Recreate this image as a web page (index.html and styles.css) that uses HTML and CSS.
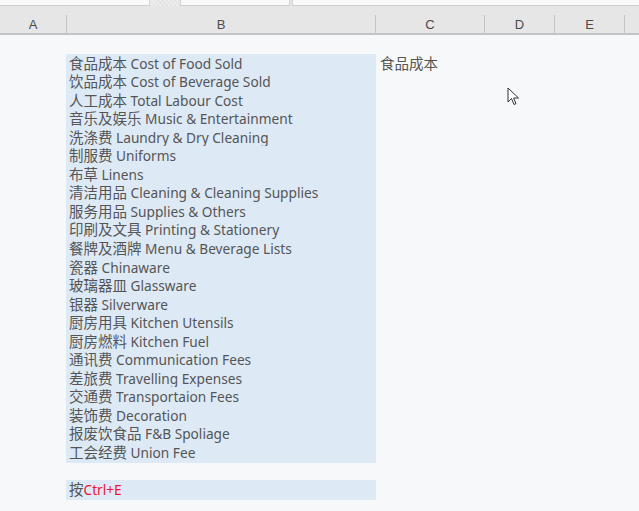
FILE: index.html
```html
<!DOCTYPE html>
<html lang="zh-CN">
<head>
  <meta charset="UTF-8" />
  <title>Sheet</title>
  <link rel="stylesheet" href="styles.css">
</head>
<body>
  <div class="tabs">
    <div class="tab tab-first"></div>
    <div class="tab-gap"></div>
    <div class="tab tab-second"></div>
    <div class="tab tab-rest"></div>
  </div>

  <div class="col-header">
    <div class="col-head col-a">A</div>
    <div class="col-head col-b">B</div>
    <div class="col-head col-c">C</div>
    <div class="col-head col-d">D</div>
    <div class="col-head col-e">E</div>
    <div class="col-head col-f"></div>
  </div>

  <div class="sheet" id="sheet"></div>

  <svg class="pointer" width="14" height="20" viewBox="0 0 14 20">
    <path d="M1 1 L1 15 L4.5 11.5 L7 17.5 L9 16.6 L6.6 11 L11.5 11 Z" fill="#fff" stroke="#333" stroke-width="1" stroke-linejoin="round"/>
  </svg>

  <script>
    const items = [
      ["食品成本", "Cost of Food Sold"],
      ["饮品成本", "Cost of Beverage Sold"],
      ["人工成本", "Total Labour Cost"],
      ["音乐及娱乐", "Music & Entertainment"],
      ["洗涤费", "Laundry & Dry Cleaning"],
      ["制服费", "Uniforms"],
      ["布草", "Linens"],
      ["清洁用品", "Cleaning & Cleaning Supplies"],
      ["服务用品", "Supplies & Others"],
      ["印刷及文具", "Printing & Stationery"],
      ["餐牌及酒牌", "Menu & Beverage Lists"],
      ["瓷器", "Chinaware"],
      ["玻璃器皿", "Glassware"],
      ["银器", "Silverware"],
      ["厨房用具", "Kitchen Utensils"],
      ["厨房燃料", "Kitchen Fuel"],
      ["通讯费", "Communication Fees"],
      ["差旅费", "Travelling Expenses"],
      ["交通费", "Transportaion Fees"],
      ["装饰费", "Decoration"],
      ["报废饮食品", "F&B Spoliage"],
      ["工会经费", "Union Fee"]
    ];

    const sheet = document.getElementById('sheet');

    function addRow(bNode, cText, filled) {
      const row = document.createElement('div');
      row.className = "row";
      const a = document.createElement('div');
      a.className = "cell";
      const b = document.createElement('div');
      b.className = filled ? "cell cell-b filled" : "cell cell-b";
      if (bNode) b.appendChild(bNode);
      const c = document.createElement('div');
      c.className = "cell cell-c";
      c.innerText = cText;
      row.appendChild(a);
      row.appendChild(b);
      row.appendChild(c);
      sheet.appendChild(row);
    }

    // row 1 is empty
    addRow(null, "", false);

    items.forEach((item, i) => {
      const span = document.createElement('span');
      const zh = document.createElement('span');
      zh.className = "zh";
      zh.innerText = item[0];
      const en = document.createElement('span');
      en.className = "en";
      en.innerText = " " + item[1];
      span.appendChild(zh);
      span.appendChild(en);
      addRow(span, i === 0 ? "食品成本" : "", true);
    });
    addRow(null, "", false);

    const hint = document.createElement('span');
    hint.innerHTML = '<span class="zh">按</span><span class="en key">Ctrl+E</span>';
    addRow(hint, "", true);
  </script>
</body>
</html>
```

FILE: styles.css
```css
body {
  margin: 0;
  padding: 0;
  background: #f7f8fa;
  font-family: "Noto Sans", "Noto Sans CJK SC", sans-serif;
  color: #555;
  overflow: hidden;
  height: 511px;
  position: relative;
}

.tabs {
  display: flex;
  height: 6px;
  background: #e4e4e4;
}

.tab {
  background: #f9f9f9;
  border-bottom: 1px solid #cfcfcf;
  height: 5px;
}

.tab-first {
  width: 149px;
  border-right: 1px solid #d4d4d4;
}

.tab-gap {
  width: 30px;
  background: repeating-linear-gradient(45deg, #e2e2e2 0 1px, #ececec 1px 3px);
}

.tab-second {
  width: 108px;
  border-left: 1px solid #d4d4d4;
  border-right: 1px solid #d4d4d4;
}

.tab-rest {
  flex: 1;
  margin-left: 2px;
  border-left: 1px solid #d4d4d4;
}

.col-header {
  display: flex;
  height: 27px;
  background: #e6e6e6;
  border-bottom: 2px solid #c4c4c4;
}

.col-head {
  font-family: "Liberation Sans", sans-serif;
  font-size: 13px;
  color: #4a4a4a;
  text-align: center;
  line-height: 17px;
  padding-top: 10px;
  border-right: 1px solid #c2c2c2;
  box-sizing: border-box;
  position: relative;
}

.col-head::after {
  content: "";
  position: absolute;
  right: -1px;
  top: 0;
  width: 1px;
  height: 9px;
  background: #e6e6e6;
}

.col-a { width: 67px; }
.col-b { width: 309px; }
.col-c { width: 109px; }
.col-d { width: 70px; }
.col-e { width: 70px; }
.col-f { flex: 1; border-right: none; }

.sheet {
  display: flex;
  flex-direction: column;
}

.row {
  display: grid;
  grid-template-columns: 66px 310px 1fr;
  height: 18.55px;
}

.cell {
  font-size: 14px;
  line-height: 18.55px;
  white-space: nowrap;
  overflow: visible;
}

.cell-b {
  padding-left: 3px;
}

.cell-c {
  padding-left: 4px;
  font-size: 14.5px;
}

.zh {
  font-size: 14.5px;
}

.en {
  font-size: 13.7px;
}

.filled {
  background: #ddeaf6;
}

.key {
  color: #ee1530;
}

.pointer {
  position: absolute;
  left: 507px;
  top: 87px;
}
```
